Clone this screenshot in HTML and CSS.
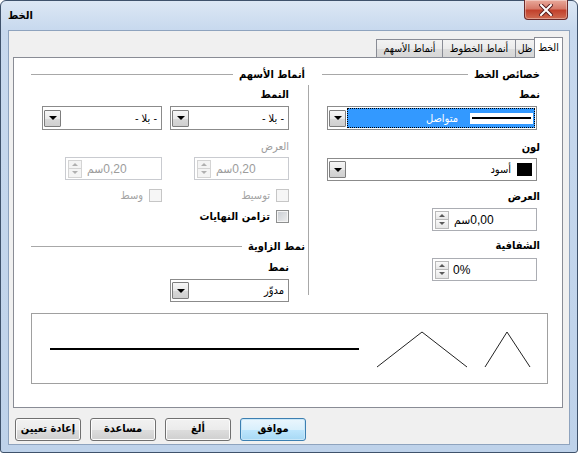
FILE: index.html
```html
<!DOCTYPE html>
<html lang="ar">
<head>
<meta charset="utf-8">
<title>الخط</title>
<link rel="stylesheet" href="styles.css">
</head>
<body>
<div class="window">
  <div class="titlebar">
    <span class="title">الخط</span>
    <span class="close">
      <svg width="14" height="12" viewBox="0 0 14 12">
        <path d="M2 1 L12 11 M12 1 L2 11" stroke="#5a2020" stroke-width="4" stroke-linecap="square"/>
        <path d="M2 1 L12 11 M12 1 L2 11" stroke="#ffffff" stroke-width="2" stroke-linecap="square"/>
      </svg>
    </span>
  </div>
  <div class="client">
    <div class="tabs">
      <div class="tab active t1">الخط</div>
      <div class="tab t2">ظل</div>
      <div class="tab t3">أنماط الخطوط</div>
      <div class="tab t4">أنماط الأسهم</div>
    </div>
    <div class="panel">
      <div class="columns">
        <section class="col-right">
          <div class="group-head head-right"><span>خصائص الخط</span><i></i></div>
          <div class="col-body">
            <div class="label l1">نمط</div>
            <div class="combo focused c1">
              <span class="hl">
                <span class="sample"><b></b></span>
                <span class="hl-text">متواصل</span>
              </span>
              <span class="drop"><i></i></span>
            </div>
            <div class="label l2">لون</div>
            <div class="combo c2">
              <span class="swatch"></span>
              <span class="combo-text">أسود</span>
              <span class="drop"><i></i></span>
            </div>
            <div class="label l3">العرض</div>
            <div class="spin s1">
              <span class="spin-btns"><i class="up"></i><i class="down"></i></span>
              <span class="val">0,00سم</span>
            </div>
            <div class="label l4">الشفافية</div>
            <div class="spin s2">
              <span class="spin-btns"><i class="up"></i><i class="down"></i></span>
              <span class="val ltr">0%</span>
            </div>
          </div>
        </section>
        <section class="col-left">
          <div class="group-head"><span>أنماط الأسهم</span><i></i></div>
          <div class="indent">
            <div class="label la1">النمط</div>
            <div class="pair p1">
              <div class="combo"><span class="combo-text">- بلا -</span><span class="drop"><i></i></span></div>
              <div class="combo"><span class="combo-text">- بلا -</span><span class="drop"><i></i></span></div>
            </div>
            <div class="label disabled la2">العرض</div>
            <div class="pair p2">
              <div class="spin dis w95">
                <span class="spin-btns"><i class="up"></i><i class="down"></i></span>
                <span class="val">0,20سم</span>
              </div>
              <div class="spin dis w97">
                <span class="spin-btns"><i class="up"></i><i class="down"></i></span>
                <span class="val">0,20سم</span>
              </div>
            </div>
            <div class="pair p3">
              <div class="check dis"><span class="box"></span><span>توسيط</span></div>
              <div class="check dis"><span class="box"></span><span>وسط</span></div>
            </div>
            <div class="check on p4"><span class="box"></span><span>تزامن النهايات</span></div>
          </div>
          <div class="group-head head2"><span>نمط الزاوية</span><i></i></div>
          <div class="indent">
            <div class="label la3">نمط</div>
            <div class="combo c3"><span class="combo-text">مدوّر</span><span class="drop"><i></i></span></div>
          </div>
        </section>
      </div>
      <div class="preview">
        <svg width="515" height="69" viewBox="0 0 515 69">
          <line x1="18" y1="35" x2="327" y2="35" stroke="#000" stroke-width="2"/>
          <polyline points="345,53 390,18 435,53" fill="none" stroke="#222" stroke-width="1"/>
          <polyline points="453,53 475,18 498,53" fill="none" stroke="#222" stroke-width="1"/>
        </svg>
      </div>
    </div>
    <div class="buttons">
      <div class="btn">إعادة تعيين</div>
      <div class="btn">مساعدة</div>
      <div class="btn">ألغ</div>
      <div class="btn default">موافق</div>
    </div>
  </div>
</div>
</body>
</html>
```
FILE: styles.css
```css
* { box-sizing: border-box; }
html, body { margin: 0; padding: 0; }
body {
  width: 578px;
  height: 453px;
  overflow: hidden;
  font-family: "Liberation Sans", "DejaVu Sans Condensed", "DejaVu Sans", sans-serif;
  font-size: 11px;
  color: #000;
  background: #fff;
}
.window {
  width: 578px;
  height: 453px;
  border: 1px solid #3f526b;
  border-radius: 6px 6px 3px 3px;
  background: linear-gradient(to bottom, #dce7f4 0, #c8d9ee 28px, #bed2ea 100%);
  display: flex;
  flex-direction: column;
}
.titlebar {
  height: 29px;
  display: flex;
  justify-content: space-between;
  align-items: flex-start;
  padding: 0 9px 0 7px;
  direction: ltr;
}
.title {
  font-family: "DejaVu Sans Condensed", "DejaVu Sans", sans-serif;
  font-weight: bold;
  font-size: 11px;
  margin-top: 8px;
}
.close {
  width: 44px;
  height: 20px;
  margin-top: -1px;
  border: 1px solid #6b2a2a;
  border-top: none;
  border-radius: 0 0 4px 4px;
  background: linear-gradient(to bottom, #e9a99b 0, #d67a6a 45%, #c2412c 55%, #cf6b52 100%);
  box-shadow: inset 0 0 0 1px rgba(255,255,255,0.35);
  display: flex;
  align-items: center;
  justify-content: center;
}
.client {
  margin-left: 7px;
  width: 562px;
  height: 415px;
  border: 1px solid #8ea3be;
  background: #f0f0f0;
  padding: 6px 6px 0 4px;
}
.tabs {
  direction: rtl;
  display: flex;
  align-items: flex-end;
  height: 21px;
  margin-bottom: -1px;
  font-family: "DejaVu Sans Condensed", "DejaVu Sans", sans-serif;
  font-size: 10.5px;
}
.tab {
  height: 19px;
  line-height: 16px;
  text-align: center;
  border: 1px solid #898c95;
  border-right: none;
  background: linear-gradient(to bottom, #f3f3f3 0, #ebebeb 50%, #dddddd 51%, #d7d7d7 100%);
  white-space: nowrap;
}
.tab.active {
  height: 21px;
  line-height: 18px;
  background: #fff;
  border-right: 1px solid #898c95;
  border-bottom: none;
  position: relative;
  z-index: 1;
}
.t1 { width: 29px; }
.t2 { width: 19px; }
.t3 { width: 73px; }
.t4 { width: 66px; }
.panel {
  height: 351px;
  border: 1px solid #898c95;
  background: #fff;
  padding-top: 10px;
}
.columns {
  direction: rtl;
  display: grid;
  grid-template-columns: 232px 274px;
  column-gap: 3px;
  margin: 0 22px 0 17px;
  height: 233px;
  font-family: "DejaVu Sans Condensed", "DejaVu Sans", sans-serif;
}
.group-head {
  display: flex;
  align-items: center;
  height: 13px;
  line-height: 13px;
  font-weight: bold;
  white-space: nowrap;
}
.group-head i {
  flex: 1;
  height: 1px;
  background: #a8a8a8;
  margin-right: 6px;
}
.head-right { padding-left: 14px; }
.head2 { margin-top: 17px; }
.col-body {
  margin-top: 4px;
  height: 210px;
  border-left: 1px solid #a8a8a8;
  padding-left: 18px;
  display: flex;
  flex-direction: column;
  align-items: stretch;
}
.label {
  height: 13px;
  line-height: 13px;
  font-weight: bold;
  white-space: nowrap;
}
.label.disabled { color: #9c9c9c; font-weight: normal; }
.l1 { margin-top: 3px; }
.l2 { margin-top: 11px; }
.l3 { margin-top: 9px; }
.l4 { margin-top: 8px; }
.combo {
  direction: rtl;
  display: flex;
  align-items: center;
  height: 23px;
  border: 1px solid #8b8b8b;
  background: #fff;
  padding: 1px;
}
.combo-text { padding-right: 3px; white-space: nowrap; }
.drop {
  margin-right: auto;
  width: 17px;
  height: 17px;
  border: 1px solid #7d7d7d;
  border-radius: 1px;
  background: linear-gradient(to bottom, #f6f6f6 0, #e9e9e9 50%, #d9d9d9 51%, #cfcfcf 100%);
  display: flex;
  align-items: center;
  justify-content: center;
}
.drop i {
  width: 0;
  height: 0;
  border-top: 4px solid #000;
  border-left: 4px solid transparent;
  border-right: 4px solid transparent;
}
.c1 { margin-top: 5px; margin-right: 3px; height: 24px; }
.c2 { margin-top: 4px; margin-right: 3px; }
.c3 { margin-top: 5px; width: 119px; }
.hl {
  flex: 1;
  align-self: stretch;
  margin-left: 1px;
  background: #3399ff;
  outline: 1px dotted #000;
  outline-offset: -1px;
  display: flex;
  align-items: center;
  padding-right: 2px;
}
.sample {
  width: 63px;
  height: 11px;
  background: #fff;
  display: flex;
  align-items: center;
  padding: 0 2px;
}
.sample b {
  flex: 1;
  height: 2px;
  background: #000;
}
.hl-text { color: #fff; margin-right: 12px; white-space: nowrap; }
.swatch {
  width: 15px;
  height: 13px;
  background: #000;
  margin-right: 3px;
}
.c2 .combo-text { padding-right: 6px; }
.spin {
  direction: ltr;
  display: flex;
  align-items: center;
  height: 23px;
  border: 1px solid #abadb3;
  background: #fff;
  font-family: "Liberation Sans", "DejaVu Sans Condensed", "DejaVu Sans", sans-serif;
  font-size: 12px;
}
.s1 { margin-top: 5px; width: 105px; margin-right: 3px; align-self: flex-start; }
.s2 { margin-top: 6px; width: 105px; margin-right: 3px; align-self: flex-start; }
.spin-btns {
  margin-left: 2px;
  width: 14px;
  height: 18px;
  display: flex;
  flex-direction: column;
}
.spin-btns i {
  flex: 1;
  border: 1px solid #b9b9b9;
  background: linear-gradient(to bottom, #fafafa, #e6e6e6);
  display: flex;
  align-items: center;
  justify-content: center;
}
.spin-btns i + i { border-top: none; }
.spin-btns .up::before {
  content: "";
  border-bottom: 3px solid #5a5a5a;
  border-left: 3px solid transparent;
  border-right: 3px solid transparent;
}
.spin-btns .down::before {
  content: "";
  border-top: 3px solid #5a5a5a;
  border-left: 3px solid transparent;
  border-right: 3px solid transparent;
}
.val { direction: rtl; margin-left: 5px; white-space: nowrap; }
.val.ltr { direction: ltr; margin-left: 4px; }
.spin.dis { color: #9c9c9c; border-color: #c9cbd0; }
.spin.dis .spin-btns i { border-color: #d4d4d4; background: #f4f4f4; }
.spin.dis .spin-btns .up::before { border-bottom-color: #b0b0b0; }
.spin.dis .spin-btns .down::before { border-top-color: #b0b0b0; }
.w95 { width: 95px; }
.w97 { width: 97px; }
.indent { margin-right: 16px; display: flex; flex-direction: column; align-items: flex-start; }
.la1 { margin-top: 7px; }
.la2 { margin-top: 10px; }
.la3 { margin-top: 8px; }
.pair {
  display: grid;
  grid-template-columns: 119px 120px;
  column-gap: 8px;
  justify-items: start;
}
.pair .combo { width: 100%; }
.p1 { margin-top: 5px; }
.p1 .combo { height: 24px; }
.p2 { margin-top: 4px; }
.p3 { margin-top: 9px; }
.p4 { margin-top: 8px; }
.check {
  display: flex;
  align-items: center;
  height: 13px;
  gap: 6px;
  white-space: nowrap;
  font-weight: bold;
}
.check .box {
  width: 13px;
  height: 13px;
  border: 1px solid #8e8f8f;
  background: linear-gradient(135deg, #c8ccd2 0, #eeeeee 100%);
  box-shadow: inset 0 0 0 1px #f4f4f4;
}
.check.dis { color: #a3a3a3; font-weight: normal; }
.check.dis .box { border-color: #c6c6c6; background: #f6f6f6; box-shadow: none; }
.preview {
  margin: 12px 14px 0 17px;
  height: 71px;
  border: 1px solid #a0a0a0;
  background: #fff;
}
.preview svg { display: block; }
.buttons {
  direction: ltr;
  display: flex;
  gap: 9px;
  margin-top: 10px;
  padding-left: 2px;
  font-family: "DejaVu Sans Condensed", "DejaVu Sans", sans-serif;
  font-weight: bold;
}
.btn {
  width: 66px;
  height: 23px;
  line-height: 20px;
  text-align: center;
  border: 1px solid #707070;
  border-radius: 3px;
  background: linear-gradient(to bottom, #f2f2f2 0, #ebebeb 50%, #dddddd 51%, #cfcfcf 100%);
  box-shadow: inset 0 0 0 1px #fcfcfc;
  white-space: nowrap;
}
.btn.default {
  border-color: #3c7fb1;
  background: linear-gradient(to bottom, #eaf6fd 0, #d9f0fc 50%, #bee6fd 51%, #a7d9f5 100%);
  box-shadow: inset 0 0 0 1px #c9e7f8;
}
```
